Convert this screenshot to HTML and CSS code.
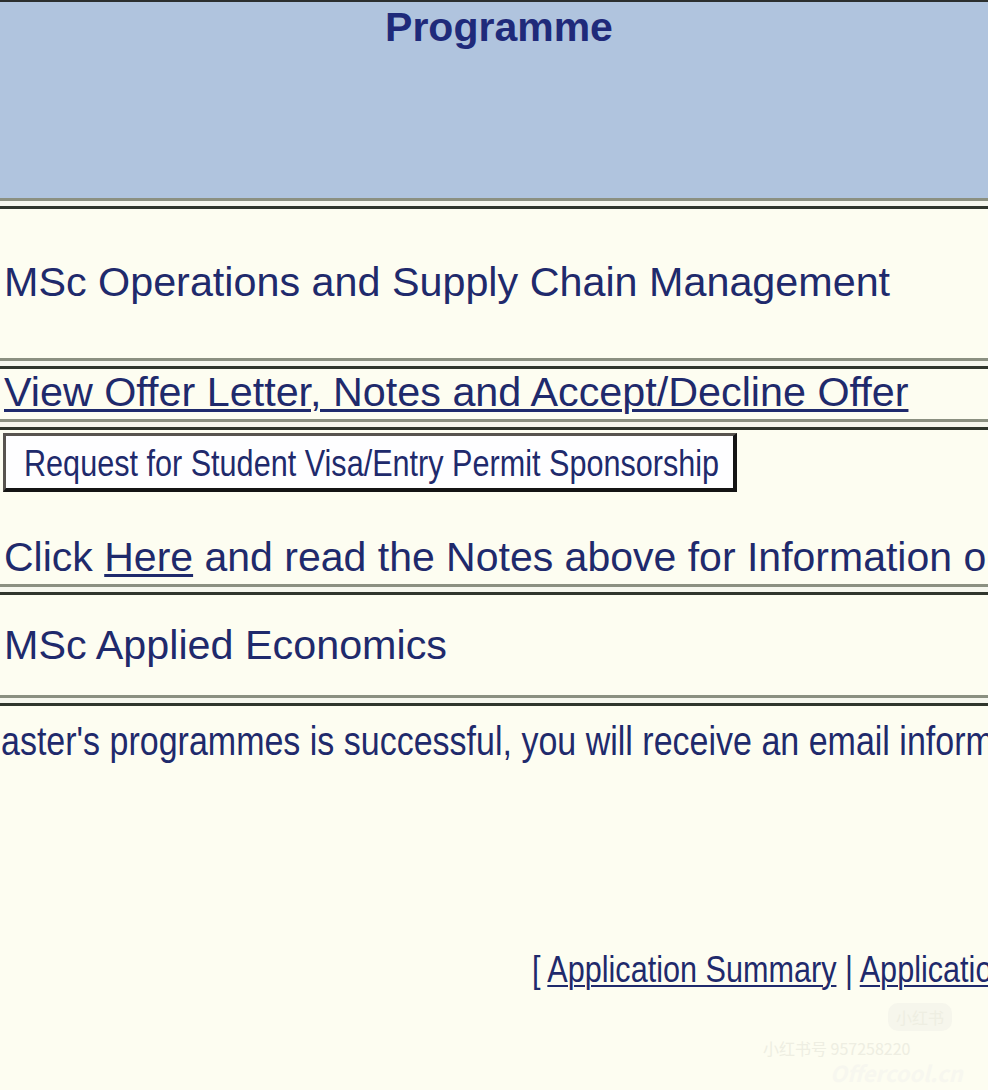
FILE: index.html
```html
<!DOCTYPE html>
<html>
<head>
    <title>Programme</title>
    <meta name="viewport" content="width=device-width, initial-scale=1">
    <link rel="stylesheet" href="styles.css">
</head>
<body>
    <div class="page">
        <div class="head">
            <h1>Programme</h1>
        </div>
        <div class="sep"></div>

        <div class="prog-name">MSc Operations and Supply Chain Management</div>
        <div class="sep"></div>

        <div class="offer-row">
            <a href="#" class="offer-link">View Offer Letter, Notes and Accept/Decline Offer</a>
        </div>
        <div class="sep"></div>

        <div class="visa-row">
            <button class="visa-button" type="button"><span class="narrow">Request for Student Visa/Entry Permit Sponsorship</span></button>
        </div>
        <div class="click-row">Click <a href="#">Here</a> and read the Notes above for Information o</div>
        <div class="sep"></div>

        <div class="prog-name second">MSc Applied Economics</div>
        <div class="sep"></div>

        <div class="notice"><span class="narrow">aster's programmes is successful, you will receive an email inform</span></div>

        <div class="footer-links"><span class="narrow">[ <a href="#">Application Summary</a> | <a href="#">Applicatio</a></span></div>

        <!-- watermark from the screenshot -->
        <div class="watermark">
            <span class="wm-badge">小红书</span>
            <span class="wm-id">小红书号 957258220</span>
            <span class="wm-site">Offercool.cn</span>
        </div>
    </div>
</body>
</html>
```

FILE: styles.css
```css
body {
    margin: 0;
    background: #fdfdf1;
    font-family: "Liberation Sans", Arial, sans-serif;
    color: #1f2a6c;
    overflow: hidden;
}
a {
    color: #1f2a6c;
}
.page {
    position: relative;
    width: 988px;
    height: 1090px;
    overflow: hidden;
}
.head {
    height: 196px;
    background: #b0c4de;
    border-top: 2px solid #2b2f2e;
}
.head h1 {
    margin: 0;
    padding: 5px 0 0 10px;
    text-align: center;
    font-size: 41px;
    line-height: 1;
    color: #1f2a7a;
}
.sep {
    height: 5px;
    background: #f6f7ee;
    border-top: 3px solid #8b9081;
    border-bottom: 3px solid #30362d;
}
.prog-name {
    padding: 53px 0 55px 4px;
    font-size: 41.3px;
    line-height: 41px;
}
.prog-name.second {
    padding: 30px 0 29px 4px;
}
.offer-row {
    padding: 3px 0 6px 4px;
    font-size: 41.3px;
    line-height: 41px;
}
.offer-link {
    text-decoration-thickness: 3px;
    text-underline-offset: 3px;
}
.visa-row {
    padding: 3px 0 0 3px;
}
.visa-button {
    width: 734px;
    height: 59px;
    margin: 0;
    padding: 3px 0 0 18px;
    text-align: left;
    background: #fefeff;
    color: #1f2a6c;
    font-family: "Liberation Sans", Arial, sans-serif;
    font-size: 36px;
    line-height: 1;
    border-style: solid;
    border-width: 3px 4px 4px 3px;
    border-color: #58544f #141414 #141414 #58544f;
    border-radius: 0;
    cursor: pointer;
}
.narrow {
    display: inline-block;
    white-space: nowrap;
    transform: scaleX(0.85);
    transform-origin: left center;
}
.click-row {
    padding: 45px 0 6px 4px;
    font-size: 41px;
    line-height: 1;
    white-space: nowrap;
}
.click-row a {
    text-decoration-thickness: 3px;
    text-underline-offset: 3px;
}
.notice {
    padding: 15px 0 0 1px;
    font-size: 40px;
    line-height: 1;
    white-space: nowrap;
}
.footer-links {
    padding: 191px 0 0 532px;
    font-size: 36px;
    line-height: 1;
    white-space: nowrap;
}
.footer-links a {
    text-decoration-thickness: 2px;
    text-underline-offset: 3px;
}
.watermark {
    position: absolute;
    right: 0;
    bottom: 0;
    width: 230px;
    height: 90px;
    font-family: "Noto Sans CJK SC", "Liberation Sans", sans-serif;
    color: #eeeee2;
}
.wm-badge {
    position: absolute;
    left: 130px;
    top: 3px;
    padding: 2px 8px;
    font-size: 16px;
    border-radius: 10px;
    background: #f6f6ec;
}
.wm-id {
    position: absolute;
    left: 5px;
    top: 40px;
    font-size: 16px;
    line-height: 1;
}
.wm-site {
    position: absolute;
    left: 72px;
    top: 61px;
    font-size: 22px;
    line-height: 1;
    font-weight: bold;
    font-style: italic;
    color: #f7f7ef;
}
```
